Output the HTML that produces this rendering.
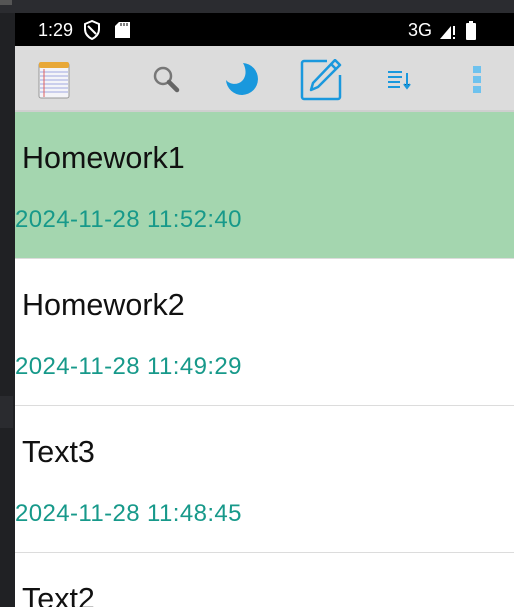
<!DOCTYPE html>
<html><head><meta charset="utf-8"><style>
*{margin:0;padding:0;box-sizing:border-box}
html,body{width:514px;height:607px;overflow:hidden}
body{background:#202124;position:relative;font-family:"Liberation Sans",sans-serif}
.top{position:absolute;left:0;top:0;width:514px;height:13px;background:#2b2c30}
.status{position:absolute;left:15px;top:13px;width:499px;height:33px;background:#000;color:#fff;font-size:18px}
.tb{position:absolute;left:15px;top:46px;width:499px;height:66px;background:#dcdcdc;border-bottom:2px solid #cfcfcf}
.row{position:absolute;left:15px;width:499px;height:147px;background:#fff;border-bottom:1px solid #dcdcdc;overflow:hidden}
.t{position:absolute;left:7px;top:29px;font-size:30.5px;color:#111}
.d{position:absolute;left:0;top:94px;font-size:24px;color:#17998a;letter-spacing:0.4px}
</style></head><body>
<div class="top"><div style="position:absolute;left:0;top:0;width:12px;height:5px;background:#555"></div></div>
<div style="position:absolute;left:0;top:396px;width:13px;height:32px;background:#2a2b2f"></div>
<div class="status">
<span style="position:absolute;left:23px;top:7px">1:29</span>
<svg style="position:absolute;left:68px;top:7px" width="18" height="20" viewBox="0 0 18 20"><path d="M9 1L2 4v5c0 5 3 8 7 10 4-2 7-5 7-10V4z" fill="none" stroke="#fff" stroke-width="2"/><path d="M5 6l8 8" stroke="#fff" stroke-width="2"/></svg>
<svg style="position:absolute;left:100px;top:9px" width="15" height="16" viewBox="0 0 15 16"><path d="M4 0h11v16H0V4z" fill="#fff"/><path d="M6 1v3M9 1v3M12 1v3" stroke="#000" stroke-width="1"/></svg>
<span style="position:absolute;left:393px;top:7px">3G</span>
<svg style="position:absolute;left:425px;top:10px" width="16" height="16" viewBox="0 0 16 16"><path d="M0 16L11 3v13z" fill="#fff"/><rect x="13" y="3" width="2" height="9" fill="#fff"/><rect x="13" y="14" width="2" height="2" fill="#fff"/></svg>
<svg style="position:absolute;left:451px;top:8px" width="10" height="19" viewBox="0 0 10 19"><rect x="3" y="0" width="4" height="2" fill="#fff"/><rect x="0" y="2" width="10" height="17" rx="1" fill="#fff"/></svg>
</div>
<div class="tb">
<svg style="position:absolute;left:23px;top:15px" width="32" height="38" viewBox="0 0 32 38"><rect x="1" y="2" width="30" height="35" rx="2" fill="#f4f4f8" stroke="#999"/><rect x="1" y="1" width="30" height="6" rx="2" fill="#e8a838"/><g stroke="#a0a8e0" stroke-width="1"><path d="M2 11h28M2 15h28M2 19h28M2 23h28M2 27h28M2 31h28"/></g><path d="M6 8v28" stroke="#e06060"/></svg>
<svg style="position:absolute;left:137px;top:19px" width="30" height="30" viewBox="0 0 30 30"><circle cx="11" cy="11" r="8" fill="none" stroke="#777" stroke-width="2.5"/><path d="M17 17l8 8" stroke="#666" stroke-width="4.5" stroke-linecap="round"/></svg>
<svg style="position:absolute;left:210px;top:16px" width="36" height="36" viewBox="0 0 36 36"><path d="M18 1a16 16 0 1 1-17 17c4 5 12 5 16 1s5-11 1-18z" fill="#1998dd"/></svg>
<svg style="position:absolute;left:285px;top:13px" width="43" height="42" viewBox="0 0 43 42"><path d="M27 2H4a2 2 0 0 0-2 2v34a2 2 0 0 0 2 2h34a2 2 0 0 0 2-2V16" fill="none" stroke="#1a98dd" stroke-width="2.5"/><path d="M35 1l5 5-22 22-7 3 2-7z" fill="none" stroke="#1a98dd" stroke-width="2.5" stroke-linejoin="round"/><path d="M31 5l5 5" stroke="#1a98dd" stroke-width="2.5"/></svg>
<svg style="position:absolute;left:373px;top:24px" width="24" height="20" viewBox="0 0 24 20"><g stroke="#1a98dd" stroke-width="2"><path d="M0 2h14M0 7h14M0 12h12M0 17h12M19 3v14M16 14l3 4 3-4"/></g></svg>
<div style="position:absolute;left:458px;top:20px;width:8px;height:27px;background:repeating-linear-gradient(#6ec2ee 0 7px,transparent 7px 10px)"></div>
</div>
<div class="row" style="top:112px;background:#a4d6af"><div class="t">Homework1</div><div class="d">2024-11-28 11:52:40</div></div>
<div class="row" style="top:259px"><div class="t">Homework2</div><div class="d">2024-11-28 11:49:29</div></div>
<div class="row" style="top:406px"><div class="t">Text3</div><div class="d">2024-11-28 11:48:45</div></div>
<div class="row" style="top:553px;height:54px;border-bottom:0"><div class="t">Text2</div></div>
</body></html>
